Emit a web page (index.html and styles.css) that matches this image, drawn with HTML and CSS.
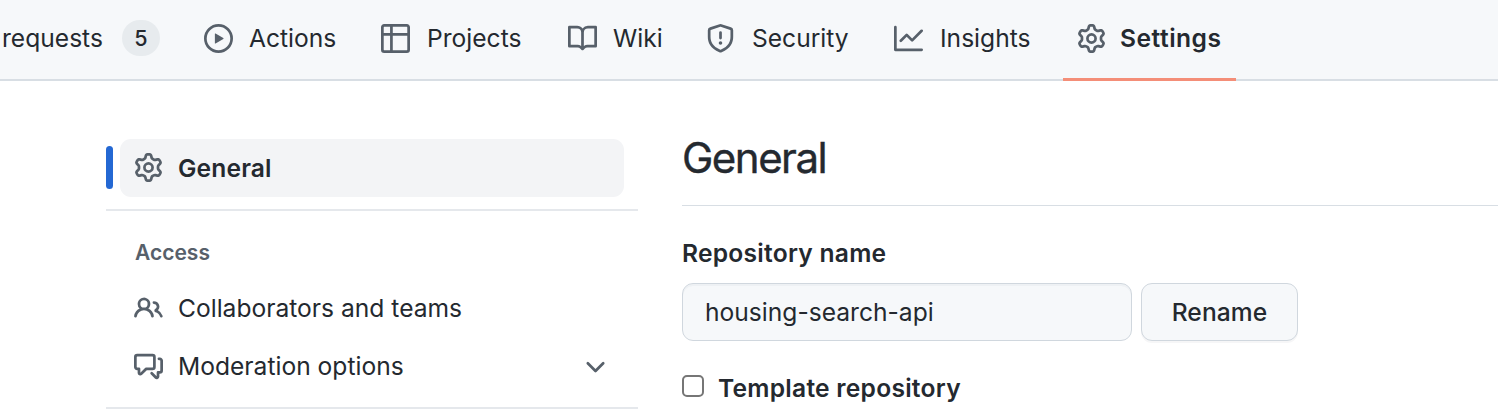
FILE: index.html
```html
<!DOCTYPE html>
<html lang="en">
<head>
<meta charset="utf-8">
<title>Settings</title>
<link rel="stylesheet" href="styles.css">
</head>
<body>
<svg class="sprite" aria-hidden="true">
  <symbol id="gear" viewBox="0 0 16 16"><path d="M8 0a8.2 8.2 0 0 1 .701.031C9.444.095 9.99.645 10.16 1.29l.288 1.107c.018.066.079.158.212.224.231.114.454.243.668.386.123.082.233.09.299.071l1.103-.303c.644-.176 1.392.021 1.82.63.27.385.506.792.704 1.218.315.675.111 1.422-.364 1.891l-.814.806c-.049.048-.098.147-.088.294.016.257.016.515 0 .772-.01.147.038.246.088.294l.814.806c.475.469.679 1.216.364 1.891a7.977 7.977 0 0 1-.704 1.217c-.428.61-1.176.807-1.82.63l-1.102-.302c-.067-.019-.177-.011-.3.071a5.909 5.909 0 0 1-.668.386c-.133.066-.194.158-.211.224l-.29 1.106c-.168.646-.715 1.196-1.458 1.26a8.006 8.006 0 0 1-1.402 0c-.743-.064-1.289-.614-1.458-1.26l-.289-1.106c-.018-.066-.079-.158-.212-.224a5.738 5.738 0 0 1-.668-.386c-.123-.082-.233-.09-.299-.071l-1.103.303c-.644.176-1.392-.021-1.82-.63a8.12 8.12 0 0 1-.704-1.218c-.315-.675-.111-1.422.363-1.891l.815-.806c.05-.048.098-.147.088-.294a6.214 6.214 0 0 1 0-.772c.01-.147-.038-.246-.088-.294l-.815-.806C.635 6.045.431 5.298.746 4.623a7.92 7.92 0 0 1 .704-1.217c.428-.61 1.176-.807 1.82-.63l1.102.302c.067.019.177.011.3-.071.214-.143.437-.272.668-.386.133-.066.194-.158.211-.224l.29-1.106C6.009.645 6.556.095 7.299.03 7.53.01 7.764 0 8 0Zm-.571 1.525c-.036.003-.108.036-.137.146l-.289 1.105c-.147.561-.549.967-.998 1.189-.173.086-.34.183-.5.29-.417.278-.97.423-1.529.27l-1.103-.303c-.109-.03-.175.016-.195.045-.22.312-.412.644-.573.99-.014.031-.021.11.059.19l.815.806c.411.406.562.957.53 1.456a4.709 4.709 0 0 0 0 .582c.032.499-.119 1.05-.53 1.456l-.815.806c-.081.08-.073.159-.059.19.162.346.353.677.573.989.02.03.085.076.195.046l1.102-.303c.56-.153 1.113-.008 1.53.27.161.107.328.204.501.29.447.222.85.629.997 1.189l.289 1.105c.029.109.101.143.137.146a6.6 6.6 0 0 0 1.142 0c.036-.003.108-.036.137-.146l.289-1.105c.147-.561.549-.967.998-1.189.173-.086.34-.183.5-.29.417-.278.97-.423 1.529-.27l1.103.303c.109.029.175-.016.195-.045.22-.313.411-.644.573-.99.014-.031.021-.11-.059-.19l-.815-.806c-.411-.406-.562-.957-.53-1.456a4.709 4.709 0 0 0 0-.582c-.032-.499.119-1.05.53-1.456l.815-.806c.081-.08.073-.159.059-.19a6.464 6.464 0 0 0-.573-.989c-.02-.03-.085-.076-.195-.046l-1.102.303c-.56.153-1.113.008-1.53-.27a4.44 4.44 0 0 0-.501-.29c-.447-.222-.85-.629-.997-1.189l-.289-1.105c-.029-.11-.101-.143-.137-.146a6.6 6.6 0 0 0-1.142 0ZM11 8a3 3 0 1 1-6 0 3 3 0 0 1 6 0ZM9.5 8a1.5 1.5 0 1 0-3.001.001A1.5 1.5 0 0 0 9.5 8Z"/></symbol>
</svg>
<nav class="tabs">
  <a class="tab"><span class="label t-requests">requests</span><span class="counter">5</span></a>
  <a class="tab"><svg class="icon" viewBox="0 0 16 16"><path d="M1.5 8a6.5 6.5 0 1113 0 6.5 6.5 0 01-13 0zM8 0a8 8 0 100 16A8 8 0 008 0zM6.379 5.227A.25.25 0 006 5.442v5.117a.25.25 0 00.379.214l4.264-2.559a.25.25 0 000-.428L6.379 5.227z"/></svg><span class="label t-actions">Actions</span></a>
  <a class="tab"><svg class="icon" viewBox="0 0 16 16"><path d="M0 1.75C0 .784.784 0 1.75 0h12.5C15.216 0 16 .784 16 1.75v12.5A1.75 1.75 0 0 1 14.25 16H1.75A1.75 1.75 0 0 1 0 14.25ZM6.5 6.5v8h7.75a.25.25 0 0 0 .25-.25V6.5Zm8-1.5V1.75a.25.25 0 0 0-.25-.25H6.5V5Zm-13 1.5v7.75c0 .138.112.25.25.25H5v-8ZM5 5V1.5H1.75a.25.25 0 0 0-.25.25V5Z"/></svg><span class="label t-projects">Projects</span></a>
  <a class="tab"><svg class="icon" viewBox="0 0 16 16"><path fill-rule="evenodd" d="M0 1.75A.75.75 0 01.75 1h4.253c1.227 0 2.317.59 3 1.501A3.744 3.744 0 0111.006 1h4.245a.75.75 0 01.75.75v10.5a.75.75 0 01-.75.75h-4.507a2.25 2.25 0 00-1.591.659l-.622.621a.75.75 0 01-1.06 0l-.622-.621A2.25 2.25 0 005.258 13H.75a.75.75 0 01-.75-.75V1.75zm8.755 3a2.25 2.25 0 012.25-2.25H14.5v9h-3.757c-.71 0-1.4.201-1.992.572l.004-7.322zm-1.504 7.324l.004-5.073-.002-2.253A2.25 2.25 0 005.003 2.5H1.5v9h3.757a3.75 3.75 0 011.994.574z"/></svg><span class="label t-wiki">Wiki</span></a>
  <a class="tab"><svg class="icon" viewBox="0 0 16 16"><path d="M7.467.133a1.75 1.75 0 011.066 0l5.25 1.68A1.75 1.75 0 0115 3.48V7c0 1.566-.32 3.182-1.303 4.682-.983 1.498-2.585 2.813-5.032 3.855a1.7 1.7 0 01-1.33 0c-2.447-1.042-4.049-2.357-5.032-3.855C1.32 10.182 1 8.566 1 7V3.48a1.75 1.75 0 011.217-1.667l5.25-1.68zm.61 1.429a.25.25 0 00-.153 0l-5.25 1.68a.25.25 0 00-.174.238V7c0 1.358.275 2.666 1.057 3.86.784 1.194 2.121 2.34 4.366 3.297a.2.2 0 00.154 0c2.245-.956 3.582-2.104 4.366-3.298C13.225 9.666 13.5 8.36 13.5 7V3.48a.25.25 0 00-.174-.237l-5.25-1.68zM9 10.5a1 1 0 11-2 0 1 1 0 012 0zm-.25-5.75a.75.75 0 10-1.5 0v3a.75.75 0 001.5 0v-3z"/></svg><span class="label t-security">Security</span></a>
  <a class="tab"><svg class="icon" viewBox="0 0 16 16"><path d="M1.5 1.75a.75.75 0 00-1.5 0v12.5c0 .414.336.75.75.75h14.5a.75.75 0 000-1.5H1.5V1.75zm14.28 2.53a.75.75 0 00-1.06-1.06L10 7.94 7.53 5.47a.75.75 0 00-1.06 0L3.22 8.72a.75.75 0 001.06 1.06L7 7.06l2.47 2.47a.75.75 0 001.06 0l5.25-5.25z"/></svg><span class="label t-insights">Insights</span></a>
  <a class="tab selected"><svg class="icon"><use href="#gear"/></svg><span class="label t-settings">Settings</span></a>
</nav>
<div class="page">
  <aside class="sidebar">
    <div class="current">
      <span class="marker"></span>
      <a class="current-item"><svg class="icon"><use href="#gear"/></svg><span class="t-side-general">General</span></a>
    </div>
    <section class="group">
      <h2 class="group-title">Access</h2>
      <a class="item"><svg class="icon" viewBox="0 0 16 16"><path d="M5.5 3.5a2 2 0 100 4 2 2 0 000-4zM2 5.5a3.5 3.5 0 115.898 2.549 5.507 5.507 0 013.034 4.084.75.75 0 11-1.482.235 4.001 4.001 0 00-7.9 0 .75.75 0 01-1.482-.236A5.507 5.507 0 013.102 8.05 3.49 3.49 0 012 5.5zM11 4a.75.75 0 100 1.5 1.5 1.5 0 01.666 2.844.75.75 0 00-.416.672v.352a.75.75 0 00.574.73c1.2.289 2.162 1.2 2.522 2.372a.75.75 0 101.434-.44 5.01 5.01 0 00-2.56-3.012A3 3 0 0011 4z"/></svg><span class="t-collab">Collaborators and teams</span></a>
      <a class="item"><svg class="icon" viewBox="0 0 16 16"><path d="M1.5 2.75a.25.25 0 01.25-.25h8.5a.25.25 0 01.25.25v5.5a.25.25 0 01-.25.25h-3.5a.75.75 0 00-.53.22L3.5 11.44V9.25a.75.75 0 00-.75-.75h-1a.25.25 0 01-.25-.25v-5.5zM1.75 1A1.75 1.75 0 000 2.75v5.5C0 9.216.784 10 1.75 10H2v1.543a1.457 1.457 0 002.487 1.03L7.061 10h3.189A1.75 1.75 0 0012 8.25v-5.5A1.75 1.75 0 0010.25 1h-8.5zM14.5 4.75a.25.25 0 00-.25-.25h-.5a.75.75 0 110-1.5h.5c.966 0 1.75.784 1.75 1.75v5.5A1.75 1.75 0 0114.25 12H14v1.543a1.457 1.457 0 01-2.487 1.03L9.22 12.28a.75.75 0 111.06-1.06l2.22 2.22v-2.19a.75.75 0 01.75-.75h1a.25.25 0 00.25-.25v-5.5z"/></svg><span class="t-moderation">Moderation options</span><svg class="icon chevron" viewBox="0 0 16 16"><path d="M12.78 6.22a.75.75 0 010 1.06l-4.25 4.25a.75.75 0 01-1.06 0L3.22 7.28a.75.75 0 011.06-1.06L8 9.94l3.72-3.72a.75.75 0 011.06 0z"/></svg></a>
    </section>
  </aside>
  <main class="content">
    <h1 class="title">General</h1>
    <label class="field-label" for="repo">Repository name</label>
    <div class="field-row">
      <input class="field" id="repo" type="text" value="housing-search-api">
      <button class="button">Rename</button>
    </div>
    <label class="check-row"><span class="box"></span><span class="t-template">Template repository</span></label>
  </main>
</div>
</body>
</html>
```
FILE: styles.css
```css
* { box-sizing: border-box; }
body {
  margin: 0;
  height: 412px;
  overflow: hidden;
  background: #fff;
  color: #24292f;
  font: 400 24.6px/36px Inter, "Liberation Sans", sans-serif;
  white-space: nowrap;
}
.sprite { display: none; }
.icon { width: 29px; height: 29px; flex: none; fill: #57606a; }

.tabs {
  display: grid;
  grid-template-columns: 204px 177px 187px 138px 188px 169px 173px;
  height: 81px;
  background: #f6f8fa;
  box-shadow: inset 0 -2px #d8dee4;
}
.tab { display: flex; height: 77px; align-items: center; }
.tab .icon { margin-right: 17px; }
.label { padding-bottom: 2px; }
.tab .t-actions, .tab .t-wiki { margin-left: -1px; }
.t-requests { margin-left: 2px; }
.counter {
  width: 38px;
  height: 36px;
  margin: 0 0 2px 19px;
  border-radius: 18px;
  background: #e7ebee;
  font-size: 21.5px;
  font-weight: 500;
  text-align: center;
}
.selected {
  height: 81px;
  padding: 0 0 1px 14px;
  border-bottom: 3px solid #f48e78;
  font-weight: 600;
}
.selected .icon { margin-right: 14px; }
.t-settings { letter-spacing: .5px; }

.page { display: flex; padding-left: 106px; }
.sidebar { width: 532px; padding-top: 58px; }
.current { display: flex; align-items: center; }
.marker { width: 7px; height: 43px; margin: 0 7px 2px 0; border-radius: 4px; background: #2468d3; }
.current-item {
  display: flex;
  align-items: center;
  gap: 15px;
  width: 504px;
  height: 58px;
  padding-left: 14px;
  border-radius: 11px;
  background: #f3f4f6;
  font-weight: 600;
}
.current-item .icon { margin-bottom: 1px; }
.t-side-general { letter-spacing: .15px; }
.group {
  height: 200px;
  margin-top: 12px;
  padding: 25px 28px 0 28px;
  border-top: 2px solid #e5e8ec;
  border-bottom: 2px solid #e5e8ec;
}
.group-title { margin: 0 0 9px 1px; color: #57606a; font-size: 21px; line-height: 34px; font-weight: 600; }
.item { display: flex; align-items: center; gap: 15px; height: 58px; }
.chevron { margin: 0 0 2px auto; }

.content { flex: 1; margin-left: 44px; }
.title {
  height: 125px;
  margin: 0 0 29px;
  padding-top: 49px;
  border-bottom: 1px solid #d8dee4;
  font-size: 42px;
  line-height: 56px;
  font-weight: 400;
  letter-spacing: -1.5px;
  -webkit-text-stroke: .4px #24292f;
}
.field-label { display: block; height: 48px; font-weight: 600; letter-spacing: .25px; }
.field-row { display: flex; gap: 9px; }
.field, .button {
  height: 58px;
  border: 1px solid #d0d7de;
  border-radius: 11px;
  background: #f6f8fa;
  color: #24292f;
  font: inherit;
}
.field { width: 450px; padding: 0 22px; box-shadow: inset 0 2px rgba(208, 215, 222, .2); }
.button { width: 157px; padding: 0; font-weight: 500; letter-spacing: .1px; box-shadow: 0 2px rgba(31, 35, 40, .04); }
.check-row { display: flex; align-items: center; gap: 14px; margin-top: 29px; font-weight: 600; letter-spacing: .25px; }
.box { width: 22px; height: 22px; margin-bottom: 4px; border: 2px solid #767676; border-radius: 5px; }
```
